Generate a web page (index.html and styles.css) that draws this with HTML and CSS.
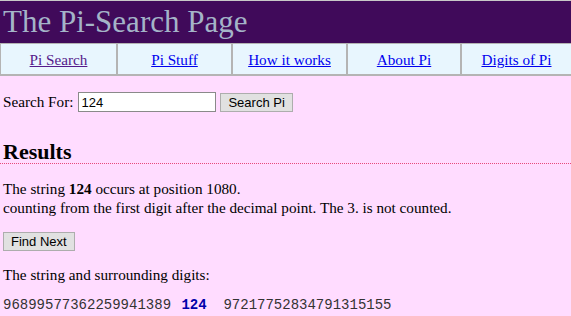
FILE: index.html
```html
<!DOCTYPE html>
<html lang="en">
<head>
    <meta charset="UTF-8">
    <meta name="viewport" content="width=device-width, initial-scale=1.0">
    <title>The Pi-Search Page</title>
    <link rel="stylesheet" href="styles.css">
</head>
<body>
    <div class="masthead">
        <h1>The Pi-Search Page</h1>
    </div>
    <div class="tabs">
        <div class="tab"><a href="#" class="visited">Pi Search</a></div>
        <div class="tab"><a href="#">Pi Stuff</a></div>
        <div class="tab"><a href="#">How it works</a></div>
        <div class="tab"><a href="#">About Pi</a></div>
        <div class="tab"><a href="#">Digits of Pi</a></div>
    </div>
    <div class="content">
        <form class="search-form">
            <label for="query">Search For:</label>
            <input type="text" id="query" value="124">
            <button type="button" class="btn">Search Pi</button>
        </form>

        <h2 class="results-title">Results</h2>
        <p class="found">The string <b>124</b> occurs at position 1080.<br>
        counting from the first digit after the decimal point. The 3. is not counted.</p>

        <div class="actions">
            <button type="button" class="btn">Find Next</button>
        </div>

        <p class="context-label">The string and surrounding digits:</p>
        <p class="digits">96899577362259941389 <b class="hit">124</b>  97217752834791315155</p>
    </div>
</body>
</html>
```

FILE: styles.css
```css
body {
    margin: 0;
    background-color: #ffdcff;
    font-family: 'Liberation Serif', 'Times New Roman', serif;
    font-size: 15.2px;
    color: #000;
}
.masthead {
    background-color: #400a5a;
    border-top: 1px solid #c8c8c8;
    padding: 4px 3px 4px;
}
.masthead h1 {
    margin: 0;
    font-weight: normal;
    font-size: 31px;
    line-height: 34px;
    color: #a4b4c8;
}
.tabs {
    display: grid;
    grid-template-columns: 117px 115px 115px 114px 1fr;
    background-color: #e8f6fe;
    border-top: 1px solid #b4b4b4;
    border-left: 1px solid #b4b4b4;
    border-bottom: 2px solid #b4b4b4;
}
.tab {
    border-right: 2px solid #b4b4b4;
    text-align: center;
    height: 30px;
    line-height: 32px;
}
.tab:last-child {
    border-right: none;
}
.tab a {
    color: #0000ee;
}
.tab a.visited {
    color: #551a8b;
}
.content {
    padding: 0 3px;
}
.search-form {
    display: flex;
    align-items: center;
    margin: 16px 0 0;
}
.search-form label {
    margin-right: 5px;
}
.search-form input {
    width: 132px;
    height: 16px;
    padding: 1px 2px;
    border: 1px solid #8a8a8a;
    font-family: 'Liberation Sans', Arial, sans-serif;
    font-size: 13px;
    background: #fff;
    margin: 0 4px 0 0;
}
.btn {
    font-family: 'Liberation Sans', Arial, sans-serif;
    font-size: 13px;
    background-color: #e1e1e1;
    border: 1px solid #adadad;
    padding: 1px 7px;
    height: 19px;
    color: #000;
}
.results-title {
    margin: 28px -3px 0;
    padding: 0 3px;
    font-size: 22px;
    line-height: 23px;
    border-bottom: 1px dotted #e8487a;
}
p {
    line-height: 19px;
}
.found {
    margin: 15px 0 0;
}
.actions {
    display: flex;
    margin-top: 15px;
}
.context-label {
    margin: 14px 0 0;
}
.digits {
    margin: 13px 0 0;
    font-family: 'Liberation Mono', 'Courier New', monospace;
    font-size: 14px;
    line-height: 16px;
    white-space: pre;
    color: #333;
}
.hit {
    color: #0000aa;
    margin-left: 2px;
}
```
